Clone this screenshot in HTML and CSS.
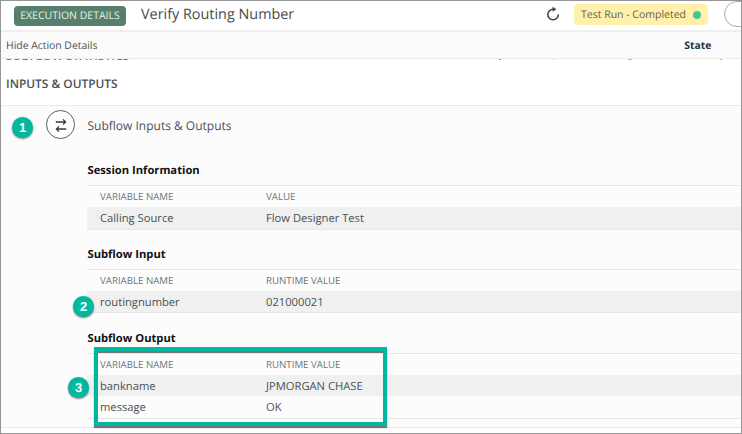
FILE: index.html
```html
<!DOCTYPE html>
<html lang="en">
<head>
<meta charset="utf-8">
<title>Execution Details</title>
<link rel="stylesheet" href="styles.css">
</head>
<body>
<div class="window">
  <header class="header">
    <span class="tag">EXECUTION DETAILS</span>
    <h1 class="title">Verify Routing Number</h1>
    <svg class="refresh" viewBox="0 0 14 16" width="14" height="16"><path d="M7.2 3.2A5.3 5.3 0 1 0 12.4 8.6" fill="none" stroke="#3c4043" stroke-width="1.5"/><path d="M6.6.8 10.4 3.3 6.6 5.8Z" fill="#3c4043"/></svg>
    <span class="status">Test Run - Completed<i class="dot"></i></span>
    <span class="pill"></span>
  </header>
  <div class="toolbar"><span class="hide">Hide Action Details</span><span class="state">State</span></div>
  <div class="scroll">
    <div class="previous"><span class="previous-title">SUBFLOW STATISTICS</span><span class="mark mark-a"></span><span class="mark mark-b"></span><span class="mark mark-c"></span><span class="mark mark-d"></span></div>
    <h2 class="heading">INPUTS &amp; OUTPUTS</h2>
    <section class="panel">
      <div class="panel-head">
        <span class="circle"><svg viewBox="0 0 12 14" width="12" height="14" fill="none" stroke="#293e40" stroke-width="1.3"><path d="M.8 4H10.6M8 1.4 10.6 4 8 6.6M11.2 11H1.4M4 8.4 1.4 11 4 13.6"/></svg></span>
        <span class="panel-title">Subflow Inputs &amp; Outputs</span>
      </div>
      <div class="group">
        <h3>Session Information</h3>
        <div class="table">
          <div class="row head"><span>VARIABLE NAME</span><span>VALUE</span></div>
          <div class="row shade"><span>Calling Source</span><span>Flow Designer Test</span></div>
        </div>
      </div>
      <div class="group">
        <h3>Subflow Input</h3>
        <div class="table">
          <div class="row head"><span>VARIABLE NAME</span><span>RUNTIME VALUE</span></div>
          <div class="row shade"><span>routingnumber</span><span>021000021</span></div>
        </div>
      </div>
      <div class="group">
        <h3>Subflow Output</h3>
        <div class="table">
          <div class="row head"><span>VARIABLE NAME</span><span>RUNTIME VALUE</span></div>
          <div class="row shade"><span>bankname</span><span>JPMORGAN CHASE</span></div>
          <div class="row"><span>message</span><span>OK</span></div>
        </div>
      </div>
    </section>
  </div>
  <div class="highlight"></div>
  <span class="badge one">1</span>
  <span class="badge two">2</span>
  <span class="badge three">3</span>
</div>
</body>
</html>
```
FILE: styles.css
```css
* { box-sizing: border-box; }
body { margin: 0; font-family: "Open Sans", sans-serif; color: #485255; text-rendering: geometricPrecision; }
.window { position: relative; width: 742px; height: 434px; border: 1px solid #969696; background: #fff; overflow: hidden; display: flex; flex-direction: column; }
h1, h2, h3 { margin: 0; white-space: nowrap; }
span { white-space: nowrap; }
.header { height: 31px; flex: none; display: flex; border-bottom: 2px solid #efefef; }
.tag { width: 112px; height: 20px; margin: 5px 0 0 13px; flex: none; border-radius: 4px; background: #56806b; color: #e8efea; font-size: 10.5px; line-height: 20px; text-align: center; }
.title { flex: none; margin-left: 15px; width: 405px; font-size: 14.4px; font-weight: 400; line-height: 28px; color: #4a4a4a; }
.refresh { flex: none; margin-top: 5px; }
.status { flex: none; width: 134px; height: 21px; margin: 3px 0 0 14px; padding: 1px 7px 0; border-radius: 4px; background: #fff0ac; color: #626047; font-size: 10.5px; line-height: 21px; display: flex; align-items: center; justify-content: space-between; }
.dot { width: 8px; height: 8px; margin-top: -1px; border-radius: 50%; background: #40c78c; }
.pill { flex: none; width: 50px; height: 26px; margin-left: 16px; border: 1px solid #a5afaf; border-radius: 13px; }
.toolbar { flex: none; height: 27px; display: flex; justify-content: space-between; padding: 0 29.5px 0 5px; background: #fbfbfb; border-bottom: 1px solid #ececec; font-size: 10.4px; line-height: 28px; }
.state { font-weight: 700; color: #293440; }
.scroll { flex: 1; overflow: hidden; }
.previous { height: 1px; display: flex; align-items: flex-end; overflow: hidden; padding-left: 5px; }
.previous-title { flex: none; width: 124px; font-size: 12px; line-height: 8px; font-weight: 600; color: #777; }
.mark { flex: none; height: 1px; width: 2px; background: #8a9090; }
.mark-a { margin-left: 369px; }
.mark-b { margin-left: 52px; width: 1px; background: #9cc5c0; }
.mark-c { margin-left: 74px; width: 4px; background: #9cc5c0; }
.mark-d { margin-left: 88px; background: #a8c68f; }
.heading { height: 46px; padding-left: 5px; font-size: 11.9px; font-weight: 600; line-height: 48px; border-bottom: 1px solid #e9e9e9; }
.panel { height: 322px; background: #fcfcfc; border-bottom: 1px solid #e9e9e9; }
.panel-head { height: 54px; padding: 4px 0 0 45px; display: flex; }
.circle { width: 29px; height: 29px; border: 1px solid #5a5f62; border-radius: 50%; background: #fff; display: flex; align-items: center; justify-content: center; }
.panel-title { margin-left: 12.5px; font-size: 12px; line-height: 32px; }
.group { height: 83.75px; margin-left: 86px; }
.group h3 { height: 25px; padding-left: .5px; font-size: 11.2px; line-height: 21px; font-weight: 700; color: #111; }
.table { border-top: 1px solid #e7e7e7; border-bottom: 1px solid #e7e7e7; }
.row { height: 21.5px; display: grid; grid-template-columns: 166px 1fr; padding-left: 13px; font-size: 11.2px; line-height: 23px; }
.row.head { height: 21px; font-size: 9.7px; color: #6b7777; line-height: 22px; }
.shade { background: #f0f0f0; }
.highlight { position: absolute; left: 93px; top: 346px; width: 293px; height: 79px; border: 4px solid #00b89f; box-shadow: 0 2px 1px #777, inset 0 2px 0 #777; }
.badge { position: absolute; width: 21px; height: 21px; border-radius: 50%; background: #00b89f; box-shadow: 0 1px 2px #777; color: #fff; font: 700 13px/22px "Liberation Sans", sans-serif; text-align: center; }
.one { left: 11px; top: 116px; }
.two { left: 72px; top: 295px; }
.three { left: 67px; top: 376px; }
```
